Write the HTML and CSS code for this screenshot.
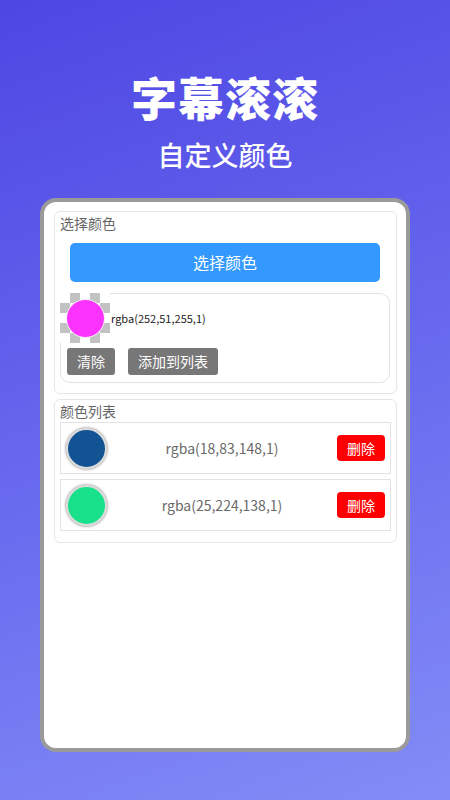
FILE: index.html
```html
<!DOCTYPE html>
<html lang="zh-CN">

<head>
    <meta charset="UTF-8">
    <title>字幕滚滚</title>
    <link rel="stylesheet" href="styles.css">
</head>

<body>
    <div class="head">
        <h1 class="title">字幕滚滚</h1>
        <p class="sub">自定义颜色</p>
    </div>

    <div class="phone">
        <div class="section">
            <div class="label">选择颜色</div>
            <div class="pick-btn">选择颜色</div>
            <div class="picked">
                <div class="picked-top">
                    <div class="checker">
                        <span class="dot" style="background: rgba(252,51,255,1);"></span>
                    </div>
                    <span class="picked-text">rgba(252,51,255,1)</span>
                </div>
                <div class="picked-btns">
                    <span class="gray-btn">清除</span>
                    <span class="gray-btn">添加到列表</span>
                </div>
            </div>
        </div>

        <div class="section list">
            <div class="label">颜色列表</div>
            <div class="row">
                <span class="swatch" style="background: rgba(18,83,148,1);"></span>
                <span class="row-text">rgba(18,83,148,1)</span>
                <span class="del-btn">删除</span>
            </div>
            <div class="row">
                <span class="swatch" style="background: rgba(25,224,138,1);"></span>
                <span class="row-text">rgba(25,224,138,1)</span>
                <span class="del-btn">删除</span>
            </div>
        </div>
    </div>
</body>

</html>
```

FILE: styles.css
```css
* {
    margin: 0;
    padding: 0;
    box-sizing: border-box;
}

body {
    width: 450px;
    height: 800px;
    overflow: hidden;
    font-family: "Noto Sans CJK SC", "Noto Sans", sans-serif;
    background: linear-gradient(160deg, #4e46e3 0%, #6768ee 50%, #838cf6 100%);
}

.head {
    padding-top: 72px;
    text-align: center;
    color: #fff;
}

.title {
    font-size: 46px;
    line-height: 48px;
    font-weight: 900;
    letter-spacing: 1px;
}

.sub {
    margin-top: 20px;
    font-size: 27px;
    line-height: 30px;
    font-weight: 500;
}

/* 手机框 */
.phone {
    margin: 28px 40px 0;
    height: 554px;
    background: #fff;
    border: 4px solid #9a9a9a;
    border-radius: 16px;
    padding: 9px 9px 0 10px;
}

.section {
    border: 1px solid #e6e6e6;
    border-radius: 6px;
    padding: 0 6px 10px 5px;
}

.label {
    font-size: 14px;
    line-height: 20px;
    color: #666;
    padding-top: 1px;
}

.pick-btn {
    margin: 10px 10px 0;
    height: 39px;
    line-height: 39px;
    background: #3399ff;
    border-radius: 5px;
    color: #fff;
    font-size: 16px;
    text-align: center;
}

.picked {
    margin-top: 11px;
    height: 90px;
    border: 1px solid #e3e3e3;
    border-radius: 10px;
}

.picked-top {
    display: flex;
    align-items: center;
    margin: -1px 0 0 -1px;
}

/* 透明底的棋盘格 */
.checker {
    width: 50px;
    height: 50px;
    display: flex;
    align-items: center;
    justify-content: center;
    background: conic-gradient(#c2c2c2 0 25%, #fff 0 50%, #c2c2c2 0 75%, #fff 0) 0 0 / 20px 20px;
}

.dot {
    width: 39px;
    height: 39px;
    border-radius: 50%;
    border: 1px solid #f4f4f4;
}

.picked-text {
    font-size: 11px;
    color: #222;
    margin-left: 1px;
}

.picked-btns {
    display: flex;
    gap: 13px;
    padding: 5px 0 0 6px;
}

.gray-btn {
    height: 27px;
    line-height: 27px;
    padding: 0 10px;
    background: #777;
    color: #fff;
    font-size: 14px;
    border-radius: 3px;
}

.list {
    margin-top: 5px;
    padding: 0 5px 11px 5px;
}

.row {
    display: flex;
    align-items: center;
    height: 52px;
    border: 1px solid #e3e3e3;
    padding: 0 5px;
    margin-top: 5px;
}

.label + .row {
    margin-top: 1px;
}

.swatch {
    width: 41px;
    height: 41px;
    border-radius: 50%;
    border: 2px solid #ddd;
    box-shadow: 0 0 3px #777;
}

.row-text {
    flex: 1;
    text-align: center;
    font-size: 14px;
    color: #6a6a6a;
}

.del-btn {
    width: 48px;
    height: 26px;
    line-height: 26px;
    text-align: center;
    background: #ff0000;
    color: #fff;
    font-size: 14px;
    border-radius: 4px;
}
```
